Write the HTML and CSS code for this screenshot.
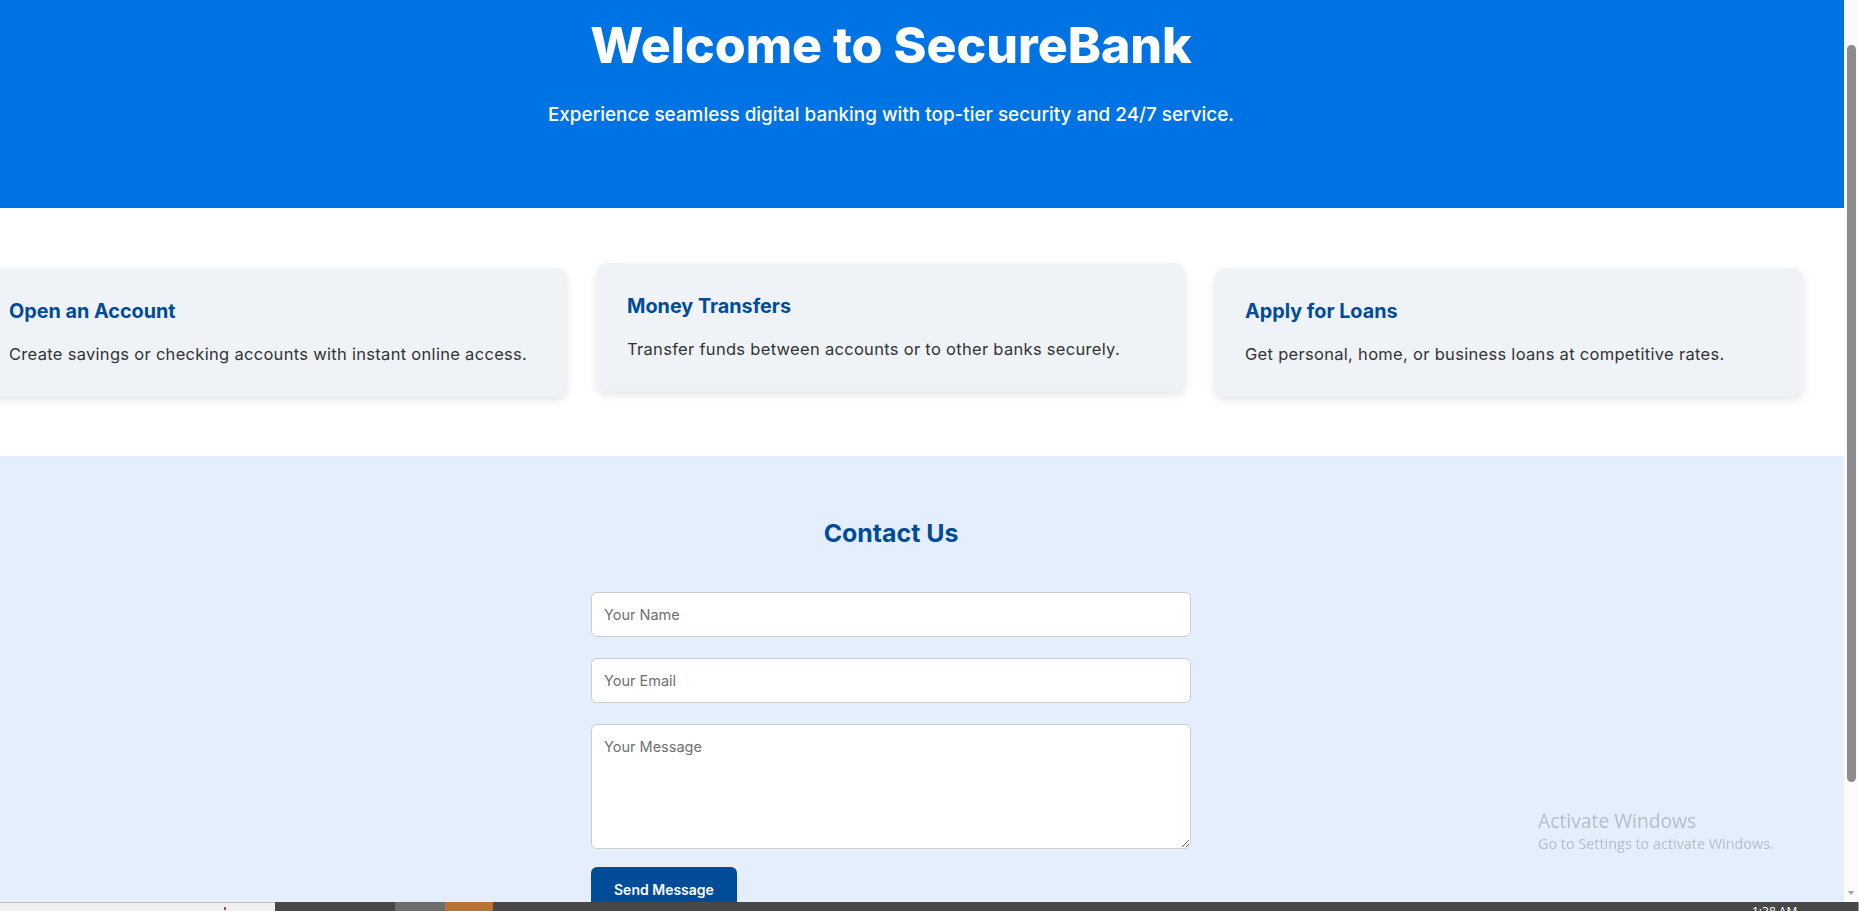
FILE: index.html
```html
<!DOCTYPE html>
<html lang="en">
<head>
<meta charset="UTF-8">
<title>SecureBank</title>
<link rel="stylesheet" href="styles.css">
</head>
<body>
<div class="page">
  <header class="hero">
    <div class="wrap">
      <h1>Welcome to SecureBank</h1>
      <p>Experience seamless digital banking with top-tier security and 24/7 service.</p>
    </div>
  </header>

  <section class="services">
    <div class="wrap cards">
      <div class="card">
        <h3>Open an Account</h3>
        <p>Create savings or checking accounts with instant online access.</p>
      </div>
      <div class="card raised">
        <h3>Money Transfers</h3>
        <p>Transfer funds between accounts or to other banks securely.</p>
      </div>
      <div class="card">
        <h3>Apply for Loans</h3>
        <p>Get personal, home, or business loans at competitive rates.</p>
      </div>
    </div>
  </section>

  <section class="contact">
    <div class="wrap">
      <h2>Contact Us</h2>
      <form class="form">
        <input type="text" placeholder="Your Name">
        <input type="email" placeholder="Your Email">
        <textarea placeholder="Your Message"></textarea>
        <button type="button">Send Message</button>
      </form>
    </div>
  </section>
</div>

<div class="scrollbar">
  <div class="thumb"></div>
  <div class="arrow-down"></div>
</div>

<div class="watermark">
  <div class="wm-title">Activate Windows</div>
  <div class="wm-sub">Go to Settings to activate Windows.</div>
</div>

<div class="taskbar">
  <div class="tb-light"><span class="tb-mark"></span></div>
  <div class="tb-dark tb-a"></div>
  <div class="tb-gray"></div>
  <div class="tb-orange"></div>
  <div class="tb-dark tb-rest"><span class="tb-clock">1:38 AM</span></div>
</div>
</body>
</html>
```

FILE: styles.css
```css
* {
  box-sizing: border-box;
}

html,
body {
  margin: 0;
  height: 100%;
}

body {
  font-family: Inter, "Noto Sans", sans-serif;
  overflow: hidden;
  background: #ffffff;
  color: #333333;
}

.page {
  margin-right: 15px;
}

.wrap {
  width: 1782px;
}

/* Hero */
.hero {
  background: #0073e4;
  color: #ffffff;
  height: 208px;
  padding-top: 15px;
}

.hero h1 {
  margin: 0;
  text-align: center;
  font-size: 50px;
  line-height: 60px;
  font-weight: 800;
}

.hero p {
  margin: 26px 0 0;
  text-align: center;
  font-size: 18.9px;
  line-height: 28px;
  font-weight: 500;
}

/* Services */
.services {
  background: #ffffff;
  padding: 60px 0;
}

.cards {
  display: flex;
  justify-content: center;
  gap: 30px;
}

.card {
  flex: 0 0 588px;
  background: #eff3f8;
  border-radius: 10px;
  padding: 30px;
  box-shadow: 0 4px 10px rgba(0, 0, 0, 0.1);
}

.card.raised {
  transform: translateY(-5px);
}

.card h3 {
  margin: 0 0 17px;
  font-size: 19.8px;
  line-height: 27px;
  font-weight: 700;
  color: #004c99;
}

.card p {
  margin: 0;
  font-size: 16.5px;
  letter-spacing: 0.3px;
  line-height: 24px;
  color: #333333;
}

/* Contact */
.contact {
  background: #e4eefd;
  padding-top: 60px;
  min-height: 600px;
}

.contact h2 {
  margin: 0 0 42px;
  text-align: center;
  font-size: 24.9px;
  line-height: 34px;
  font-weight: 700;
  color: #004c99;
}

.form {
  width: 600px;
  margin: 0 auto;
  display: flex;
  flex-direction: column;
}

.form input,
.form textarea {
  font-family: inherit;
  font-size: 14.5px;
  line-height: 20px;
  color: #333333;
  background: #ffffff;
  border: 1px solid #cccccc;
  border-radius: 6px;
  padding: 0 12px;
}

.form input {
  height: 45px;
  margin-bottom: 21px;
}

.form textarea {
  height: 125px;
  padding: 12px;
  margin-bottom: 18px;
}

.form ::placeholder {
  color: #707070;
}

.form button {
  align-self: flex-start;
  font-family: inherit;
  font-size: 14px;
  line-height: 21px;
  font-weight: 600;
  color: #ffffff;
  background: #004c99;
  border: none;
  border-radius: 6px;
  padding: 12px 23px;
}

/* Fake scrollbar */
.scrollbar {
  position: fixed;
  top: 0;
  right: 0;
  width: 15px;
  height: 902px;
  background: #fbfbfb;
}

.thumb {
  position: absolute;
  left: 3px;
  top: 45px;
  width: 9px;
  height: 737px;
  background: #8b8b8b;
  border-radius: 5px;
}

.arrow-down {
  position: absolute;
  left: 4px;
  top: 891px;
  width: 0;
  height: 0;
  border-left: 3.5px solid transparent;
  border-right: 3.5px solid transparent;
  border-top: 4px solid #a0a0a0;
}

/* Windows watermark */
.watermark {
  position: fixed;
  left: 1538px;
  top: 809px;
  font-family: "Open Sans", "Noto Sans", sans-serif;
  color: #b6bdc8;
}

.wm-title {
  font-size: 19.3px;
  line-height: 23px;
}

.wm-sub {
  margin-top: 2px;
  font-size: 14.4px;
  line-height: 20px;
}

/* Taskbar strip */
.taskbar {
  position: fixed;
  left: 0;
  right: 0;
  bottom: 0;
  height: 9px;
  display: flex;
  overflow: hidden;
}

.tb-light {
  position: relative;
  width: 275px;
  background: #f0f0f0;
  border-top: 1px solid #bdbdbd;
}

.tb-mark {
  position: absolute;
  left: 224px;
  top: 4px;
  width: 2px;
  height: 3px;
  background: #c0405a;
}

.tb-dark {
  background: #484848;
}

.tb-a {
  width: 120px;
}

.tb-gray {
  width: 50px;
  background: #6d6d6d;
}

.tb-orange {
  width: 48px;
  background: #b87333;
}

.tb-rest {
  position: relative;
  flex: 1;
  border-right: 1px solid #9a9a9a;
}

.tb-clock {
  position: absolute;
  left: 1259px;
  top: 3px;
  font-family: "Open Sans", sans-serif;
  font-size: 12px;
  line-height: 14px;
  color: #ffffff;
}
```
